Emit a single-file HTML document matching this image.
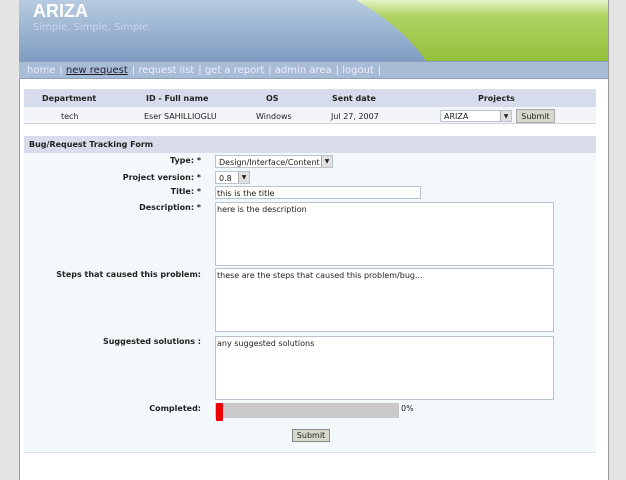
<!DOCTYPE html>
<html><head><style>
*{margin:0;padding:0;box-sizing:border-box}
body{width:626px;height:480px;background:#e4e4e4;font-family:"DejaVu Sans","Liberation Sans",sans-serif;font-size:8px;color:#222;position:relative;overflow:hidden}
.a{position:absolute}
#main{left:19px;top:0;width:590px;height:480px;background:#fff;border-left:1px solid #999;border-right:1px solid #999}
#hdr{left:19px;top:0;width:589px;height:61px;background:linear-gradient(180deg,#b8cbe0,#8aa6c8 80%,#7f9cc2);overflow:hidden}
#nav{left:19px;top:61px;width:589px;height:18px;background:#a9bcd6;border-top:1px solid #8aa0bf;border-bottom:1px solid #8aa0bf;font-size:10px;color:#eef;padding:3px 0 0 8px;white-space:nowrap}
#nav span{margin-right:4px}
.lab{right:425px;font-weight:bold;text-align:right}
.box{background:#fff;border:1px solid #b9c4cf}
.arr{position:absolute;right:0;top:0;width:11px;height:100%;background:#e0e0e0;border-left:1px solid #aaa;font-size:6px;text-align:center;line-height:11px}
</style></head><body>
<div class="a" id="main"></div>
<div class="a" id="hdr">
<svg width="589" height="61" style="position:absolute;left:0;top:0"><defs><linearGradient id="g" x1="0" y1="0" x2="0" y2="1"><stop offset="0" stop-color="#e6f2c8"/><stop offset="0.25" stop-color="#b0d464"/><stop offset="1" stop-color="#93c03a"/></linearGradient></defs><path d="M337 0 Q385 28 407 61 L589 61 L589 0Z" fill="url(#g)"/></svg>
<div class="a" style="left:14px;top:1px;font:bold 18px 'Liberation Sans',sans-serif;color:#fff">ARIZA</div>
<div class="a" style="left:14px;top:22px;font-size:10px;color:#c8d6ea">Simple. Simple. Simple.</div>
</div>
<div class="a" id="nav"><span>home</span>|&nbsp;<span style="color:#223;text-decoration:underline">new request</span>|&nbsp;<span>request list</span>|&nbsp;<span>get a report</span>|&nbsp;<span>admin area</span>|&nbsp;<span>logout</span>|</div>
<div class="a" style="left:24px;top:89px;width:572px;height:18px;background:#d7dcec"></div>
<div class="a" style="left:24px;top:107px;width:572px;height:17px;background:#f3f5f9;border-bottom:1px solid #d0d4de"></div>
<div class="a" style="left:42px;top:94px;font-weight:bold">Department</div>
<div class="a" style="left:146px;top:94px;font-weight:bold">ID - Full name</div>
<div class="a" style="left:266px;top:94px;font-weight:bold">OS</div>
<div class="a" style="left:332px;top:94px;font-weight:bold">Sent date</div>
<div class="a" style="left:478px;top:94px;font-weight:bold">Projects</div>
<div class="a" style="left:61px;top:112px">tech</div>
<div class="a" style="left:144px;top:112px">Eser SAHILLIOGLU</div>
<div class="a" style="left:256px;top:112px">Windows</div>
<div class="a" style="left:331px;top:112px">Jul 27, 2007</div>
<div class="a box" style="left:440px;top:110px;width:72px;height:12px;padding:1px 3px">ARIZA<span class="arr">▼</span></div>
<div class="a" style="left:516px;top:109px;width:39px;height:14px;background:#d6d8cc;border:1px solid #aaa;text-align:center;padding-top:2px">Submit</div>
<div class="a" style="left:24px;top:136px;width:572px;height:17px;background:#d9dcea;font-weight:bold;padding:4px 0 0 5px">Bug/Request Tracking Form</div>
<div class="a" style="left:24px;top:153px;width:572px;height:300px;background:#f3f8fb;border-bottom:1px solid #dde"></div>
<div class="a lab" style="top:156px">Type: *</div>
<div class="a lab" style="top:173px">Project version: *</div>
<div class="a lab" style="top:187px">Title: *</div>
<div class="a lab" style="top:203px">Description: *</div>
<div class="a lab" style="top:270px">Steps that caused this problem:</div>
<div class="a lab" style="top:337px">Suggested solutions :</div>
<div class="a lab" style="top:404px">Completed:</div>
<div class="a box" style="left:215px;top:155px;width:118px;height:13px;padding:2px 3px">Design/Interface/Content<span class="arr">▼</span></div>
<div class="a box" style="left:215px;top:171px;width:35px;height:13px;padding:2px 3px">0.8<span class="arr">▼</span></div>
<div class="a box" style="left:215px;top:186px;width:206px;height:13px;padding:2px 1px">this is the title</div>
<div class="a box" style="left:215px;top:202px;width:339px;height:64px;padding:2px 1px">here is the description</div>
<div class="a box" style="left:215px;top:268px;width:339px;height:64px;padding:2px 1px">these are the steps that caused this problem/bug...</div>
<div class="a box" style="left:215px;top:336px;width:339px;height:64px;padding:2px 1px">any suggested solutions</div>
<div class="a" style="left:215px;top:403px;width:184px;height:15px;background:#c9c9cb"></div>
<div class="a" style="left:216px;top:403px;width:7px;height:18px;background:#e00;border-radius:1px"></div>
<div class="a" style="left:401px;top:404px">0%</div>
<div class="a" style="left:292px;top:429px;width:38px;height:13px;background:#d6d8cc;border:1px solid #888;text-align:center;padding-top:1px">Submit</div>
</body></html>
